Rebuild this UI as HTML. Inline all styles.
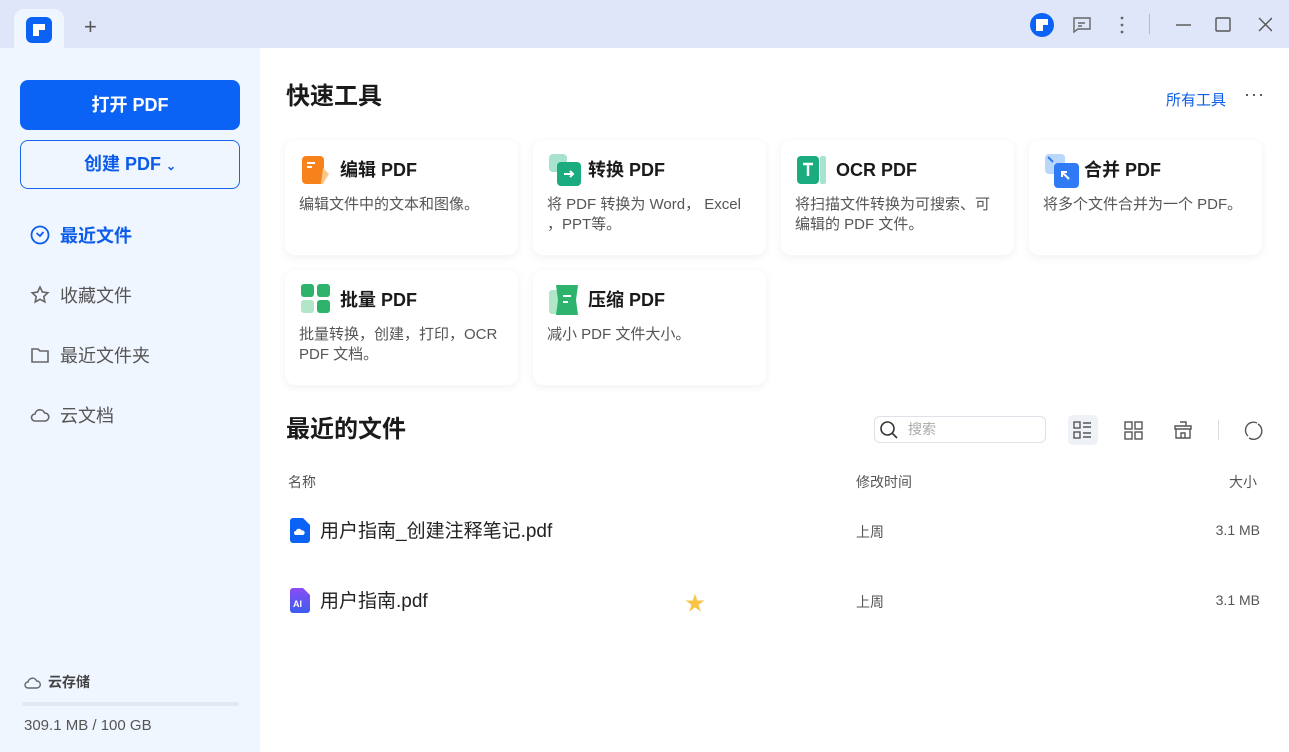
<!DOCTYPE html>
<html><head><meta charset="utf-8"><style>
*{box-sizing:border-box;margin:0;padding:0}
body{width:1289px;height:752px;overflow:hidden;font-family:"Liberation Sans","Noto Sans CJK SC",sans-serif;background:#fff;position:relative;color:#222}
.abs{position:absolute}
.top{left:0;top:0;width:1289px;height:48px;background:#dfe6fa}
.tab{left:14px;top:9px;width:50px;height:40px;background:#f0f6ff;border-radius:10px 10px 0 0}
.side{left:0;top:48px;width:260px;height:704px;background:#f0f6ff}
.btn1{left:20px;top:80px;width:220px;height:50px;background:#0b63f6;border-radius:8px;color:#fff;font-weight:bold;font-size:18px;text-align:center;line-height:50px}
.btn2{left:20px;top:140px;width:220px;height:49px;border:1.5px solid #1a66f0;border-radius:8px;color:#0b5ce8;font-weight:bold;font-size:18px;text-align:center;line-height:46px}
.nav{left:30px;font-size:18px;color:#555;display:flex;align-items:center;gap:10px}
.card{width:233px;height:115px;background:#fff;border-radius:10px;box-shadow:0 2px 8px rgba(40,60,120,.08)}
.card .t{position:absolute;left:55px;top:17px;font-size:18px;font-weight:bold;color:#1a1a1a;line-height:26px}
.card .d{position:absolute;left:14px;top:55px;width:205px;font-size:15px;color:#555;line-height:20px}
.card svg{position:absolute;left:16px;top:14px}
.h{font-size:24px;font-weight:bold;color:#1a1a1a;line-height:30px}
.small{font-size:14px;color:#555}
</style></head><body>
<div class="abs top"></div>
<div class="abs tab"></div>
<svg class="abs" style="left:26px;top:17px" width="26" height="26"><rect width="26" height="26" rx="6" fill="#0b63f6"/><path d="M7 7h12v6h-6v6H7z" fill="#fff"/></svg>
<div class="abs" style="left:84px;top:14px;font-size:22px;color:#555;font-weight:300">+</div>
<svg class="abs" style="left:1030px;top:13px" width="24" height="24"><circle cx="12" cy="12" r="12" fill="#0b63f6"/><path d="M6 6h12v6h-5v6H6z" fill="#fff"/></svg>
<svg class="abs" style="left:1072px;top:15px" width="20" height="20" fill="none" stroke="#666" stroke-width="1.4"><path d="M2 3h16v11H6l-4 3z"/><path d="M6 8h7M6 11h4"/></svg>
<svg class="abs" style="left:1119px;top:15px" width="6" height="20" fill="#666"><circle cx="3" cy="3" r="1.4"/><circle cx="3" cy="10" r="1.4"/><circle cx="3" cy="17" r="1.4"/></svg>
<div class="abs" style="left:1149px;top:14px;width:1px;height:20px;background:#bbb"></div>
<svg class="abs" style="left:1172px;top:14px" width="100" height="22" fill="none" stroke="#555" stroke-width="1.4"><path d="M4 11h15"/><rect x="44" y="4" width="14" height="13" rx="1"/><path d="M87 4l13 13M100 4L87 17"/></svg>

<div class="abs side"></div>
<div class="abs btn1">打开 PDF</div>
<div class="abs btn2">创建 PDF <span style="font-size:12px">⌄</span></div>
<div class="abs nav" style="top:222px;color:#0b5ce8;font-weight:bold"><svg width="20" height="20" fill="none" stroke="#0b5ce8" stroke-width="1.8"><circle cx="10" cy="10" r="8.5"/><path d="M6.5 8l3.5 3 3.5-4"/></svg>最近文件</div>
<div class="abs nav" style="top:282px"><svg width="20" height="20" fill="none" stroke="#666" stroke-width="1.6"><path d="M10 2l2.4 5 5.4.7-4 3.8 1 5.4L10 14.3 5.2 17l1-5.4-4-3.8 5.4-.7z"/></svg>收藏文件</div>
<div class="abs nav" style="top:342px"><svg width="20" height="20" fill="none" stroke="#666" stroke-width="1.6"><path d="M2 4h6l2 2h8v11H2z"/></svg>最近文件夹</div>
<div class="abs nav" style="top:402px"><svg width="20" height="20" fill="none" stroke="#666" stroke-width="1.6"><path d="M5 16a3.5 3.5 0 010-7 5 5 0 019.6-1A4 4 0 0115 16z"/></svg>云文档</div>
<div class="abs" style="left:24px;top:672px;font-size:14px;font-weight:bold;color:#444;display:flex;gap:6px;align-items:center"><svg width="18" height="16" fill="none" stroke="#666" stroke-width="1.4"><path d="M4 14a3 3 0 010-6 4.5 4.5 0 018.6-1A3.5 3.5 0 0113 14z"/></svg>云存储</div>
<div class="abs" style="left:22px;top:702px;width:217px;height:4px;background:#e3e8f0;border-radius:2px"></div>
<div class="abs" style="left:24px;top:717px;font-size:15px;color:#555">309.1 MB / 100 GB</div>

<div class="abs h" style="left:286px;top:82px">快速工具</div>
<div class="abs" style="left:1166px;top:89px;font-size:15px;color:#0b5ce8">所有工具</div>
<div class="abs" style="left:1244px;top:84px;font-size:18px;color:#444;letter-spacing:1px">···</div>

<div class="abs card" style="left:285px;top:140px"><svg width="30" height="32"><rect x="1" y="2" width="22" height="28" rx="4" fill="#f7821b"/><path d="M22 14l6 6-6 10h-2z" fill="#fbc78a"/><path d="M6 9h8M6 13h5" stroke="#fff" stroke-width="2"/></svg><div class="t">编辑 PDF</div><div class="d">编辑文件中的文本和图像。</div></div>
<div class="abs card" style="left:533px;top:140px"><svg width="32" height="32"><rect x="0" y="0" width="18" height="18" rx="4" fill="#a8e3cf"/><rect x="8" y="8" width="24" height="24" rx="4" fill="#1aab7e"/><path d="M15 20h9M21 17l3 3-3 3" stroke="#fff" stroke-width="2" fill="none"/></svg><div class="t">转换 PDF</div><div class="d">将 PDF 转换为 Word， Excel ，PPT等。</div></div>
<div class="abs card" style="left:781px;top:140px"><svg width="32" height="32"><rect x="0" y="2" width="22" height="28" rx="4" fill="#1aab7e"/><rect x="23" y="2" width="6" height="28" rx="2" fill="#a8e3cf"/><path d="M6 10h10M11 10v12" stroke="#fff" stroke-width="2.4"/></svg><div class="t">OCR PDF</div><div class="d">将扫描文件转换为可搜索、可编辑的 PDF 文件。</div></div>
<div class="abs card" style="left:1029px;top:140px"><svg width="34" height="34"><rect x="0" y="0" width="20" height="20" rx="4" fill="#b9d6fb"/><rect x="9" y="9" width="25" height="25" rx="4" fill="#2f7af5"/><path d="M3 3l5 5" stroke="#2f7af5" stroke-width="2"/><path d="M24 25l-7-7M17 23v-5h5" stroke="#fff" stroke-width="2" fill="none"/></svg><div class="t">合并 PDF</div><div class="d">将多个文件合并为一个 PDF。</div></div>
<div class="abs card" style="left:285px;top:270px"><svg width="30" height="30"><rect x="0" y="0" width="13" height="13" rx="3" fill="#2eb36d"/><rect x="16" y="0" width="13" height="13" rx="3" fill="#2eb36d"/><rect x="0" y="16" width="13" height="13" rx="3" fill="#b2e6c8"/><rect x="16" y="16" width="13" height="13" rx="3" fill="#2eb36d"/></svg><div class="t">批量 PDF</div><div class="d">批量转换，创建，打印，OCR PDF 文档。</div></div>
<div class="abs card" style="left:533px;top:270px"><svg width="32" height="32"><rect x="0" y="6" width="14" height="24" rx="3" fill="#b2e6c8"/><path d="M7 1h22l-2 15 2 15H7l2-15z" fill="#2eb36d"/><path d="M14 12h8M14 18h5" stroke="#fff" stroke-width="2"/></svg><div class="t">压缩 PDF</div><div class="d">减小 PDF 文件大小。</div></div>

<div class="abs h" style="left:286px;top:415px">最近的文件</div>
<div class="abs" style="left:874px;top:416px;width:172px;height:27px;border:1px solid #dde1e8;border-radius:6px;font-size:14px;color:#aaa;padding-left:33px;line-height:25px">搜索</div>
<svg class="abs" style="left:879px;top:420px" width="20" height="20" fill="none" stroke="#333" stroke-width="1.6"><circle cx="8.5" cy="8.5" r="6.5"/><path d="M13 13l5 5"/></svg>
<div class="abs" style="left:1068px;top:415px;width:30px;height:30px;background:#eef1f6;border-radius:5px"></div>
<svg class="abs" style="left:1073px;top:420px" width="20" height="20" fill="none" stroke="#555" stroke-width="1.4"><rect x="1" y="2" width="6" height="6"/><rect x="1" y="12" width="6" height="6"/><path d="M10 3h8M10 7h8M10 13h8M10 17h8"/></svg>
<svg class="abs" style="left:1124px;top:420px" width="20" height="20" fill="none" stroke="#555" stroke-width="1.4"><rect x="1" y="2" width="7" height="7"/><rect x="11" y="2" width="7" height="7"/><rect x="1" y="12" width="7" height="7"/><rect x="11" y="12" width="7" height="7"/></svg>
<svg class="abs" style="left:1173px;top:420px" width="20" height="20" fill="none" stroke="#555" stroke-width="1.4"><path d="M7 2h6v4M2 6h16v3H2zM3 9v9h14V9M8 18v-5h4v5"/></svg>
<div class="abs" style="left:1218px;top:420px;width:1px;height:20px;background:#ddd"></div>
<svg class="abs" style="left:1243px;top:420px" width="20" height="20" fill="none" stroke="#555" stroke-width="1.4"><path d="M5 16A8 8 0 0114 3M15 4a8 8 0 01-9 14"/></svg>

<div class="abs small" style="left:288px;top:472px">名称</div>
<div class="abs small" style="left:856px;top:472px">修改时间</div>
<div class="abs small" style="left:1229px;top:472px">大小</div>

<svg class="abs" style="left:290px;top:518px" width="20" height="25"><path d="M3 0h10l7 7v15a3 3 0 01-3 3H3a3 3 0 01-3-3V3a3 3 0 013-3z" fill="#0b63f6"/><path d="M6 17a2 2 0 010-4 3 3 0 015.6-.5A2 2 0 0113 17z" fill="#fff"/></svg>
<div class="abs" style="left:320px;top:516px;font-size:19px;color:#222">用户指南_创建注释笔记.pdf</div>
<div class="abs small" style="left:856px;top:522px">上周</div>
<div class="abs small" style="left:1260px;top:522px;transform:translateX(-100%);white-space:nowrap">3.1 MB</div>

<svg class="abs" style="left:290px;top:588px" width="20" height="25"><defs><linearGradient id="g" x1="0" y1="0" x2="0" y2="1"><stop offset="0" stop-color="#8a4cf5"/><stop offset="1" stop-color="#3d5cf0"/></linearGradient></defs><path d="M3 0h10l7 7v15a3 3 0 01-3 3H3a3 3 0 01-3-3V3a3 3 0 013-3z" fill="url(#g)"/><text x="3" y="19" font-size="9" font-weight="bold" fill="#fff" font-family="Liberation Sans">AI</text></svg>
<div class="abs" style="left:320px;top:586px;font-size:19px;color:#222">用户指南.pdf</div>
<div class="abs" style="left:685px;top:587px;font-size:20px;color:#f9c445">★</div>
<div class="abs small" style="left:856px;top:592px">上周</div>
<div class="abs small" style="left:1260px;top:592px;transform:translateX(-100%);white-space:nowrap">3.1 MB</div>
</body></html>
